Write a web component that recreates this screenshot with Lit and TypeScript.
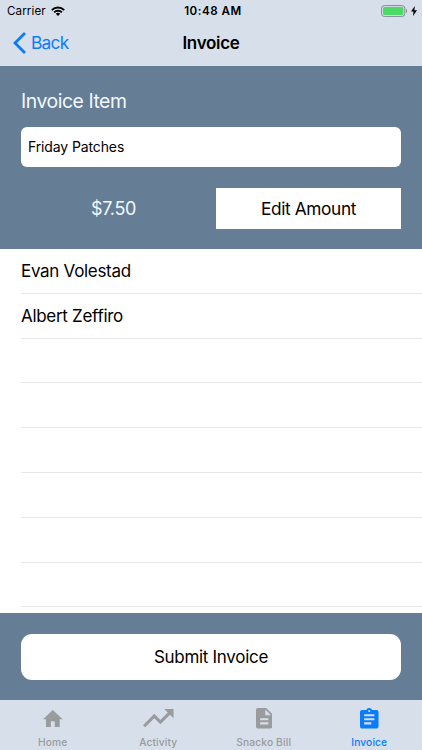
import { LitElement, html, css, svg } from "lit";
import { customElement } from "lit/decorators.js";
import { classMap } from "lit/directives/class-map.js";

const people = ["Evan Volestad", "Albert Zeffiro", "", "", "", "", "", ""];

const tabs = [
  {
    name: "home", label: "Home", box: "2 3 20 17",
    shape: svg`<path d="M10 20v-6h4v6h5v-8h3L12 3 2 12h3v8z"/>`,
  },
  {
    name: "activity", label: "Activity", box: "2 6 20 12",
    shape: svg`<path d="M16 6l2.29 2.29-4.88 4.88-4-4L2 16.59 3.41 18l6-6 4 4 6.3-6.29L22 12V6z"/>`,
  },
  {
    name: "bill", label: "Snacko Bill", box: "4 2 16 20",
    shape: svg`<path d="M14 2H6c-1.1 0-1.99.9-1.99 2L4 20c0 1.1.89 2 1.99 2H18c1.1 0 2-.9 2-2V8l-6-6zm2 16H8v-2h8v2zm0-4H8v-2h8v2zm-3-5V3.5L18.5 9H13z"/>`,
  },
  {
    name: "invoice", label: "Invoice", box: "3 1 18 20",
    shape: svg`<path d="M19 3h-4.18C14.4 1.84 13.3 1 12 1c-1.3 0-2.4.84-2.82 2H5c-1.1 0-2 .9-2 2v14c0 1.1.9 2 2 2h14c1.1 0 2-.9 2-2V5c0-1.1-.9-2-2-2zm-7 0c.55 0 1 .45 1 1s-.45 1-1 1-1-.45-1-1 .45-1 1-1zm2 14H7v-2h7v2zm3-4H7v-2h10v2zm0-4H7V7h10v2z"/>`,
  },
];

@customElement("app-root")
export class AppRoot extends LitElement {
  static styles = css`
    :host {
      display: flex;
      flex-direction: column;
      height: 750px;
      overflow: hidden;
      background: #fff;
      color: #000;
      font-family: Inter, "Liberation Sans", sans-serif;
    }
    * { box-sizing: border-box; }
    svg { display: block; }
    button { border: 0; margin: 0; padding: 0; font: inherit; color: inherit; background: none; }
    .top { height: 65.5px; flex: none; background: #d7dfea; }
    .status, .nav { display: grid; grid-template-columns: 1fr auto 1fr; align-items: center; }
    .status { height: 22px; padding: 0 5px 0 7px; font-size: 11.6px; }
    .carrier { display: flex; align-items: center; gap: 5px; letter-spacing: 0.1px; }
    .time { font-weight: 600; letter-spacing: 0.52px; padding-left: 2px; }
    .power { display: flex; justify-content: flex-end; align-items: center; gap: 3px; }
    .nav { height: 42px; padding: 0 13px; }
    .back { display: flex; align-items: center; gap: 5px; color: #087cfb; font-size: 17.3px; letter-spacing: -0.7px; }
    .back-text { padding-bottom: 1px; }
    .title { margin: 0; font-size: 17px; font-weight: 600; letter-spacing: -0.3px; }
    .item { height: 183px; flex: none; background: #657e95; padding: 25.5px 21px 0; }
    .heading { margin: 0; height: 21px; line-height: 21px; font-size: 19.4px; font-weight: 400; letter-spacing: -0.46px; color: #f2f8fd; }
    .field { margin-top: 15px; height: 40px; border-radius: 6px; background: #fff; padding: 0 7px 2px; display: flex; align-items: center; font-size: 14px; letter-spacing: -0.12px; }
    .amount { margin-top: 21px; display: grid; grid-template-columns: 185px 185px; justify-content: space-between; align-items: center; height: 41px; }
    .price { text-align: center; color: #f2f8fd; font-size: 18px; letter-spacing: -0.3px; }
    .edit { height: 41px; background: #fff; font-size: 17.3px; letter-spacing: -0.38px; }
    .list { flex: 1; min-height: 0; overflow: hidden; margin: 0; padding: 0.5px 0 0 21px; list-style: none; }
    .row { height: 44.8px; padding-top: 0.6px; border-bottom: 1px solid #e7e7e9; display: flex; align-items: center; font-size: 17px; letter-spacing: -0.3px; }
    .footer { height: 87px; flex: none; background: #657e95; padding: 20.5px 21px; }
    .submit { width: 100%; height: 46px; border-radius: 11px; background: #fff; font-size: 17px; letter-spacing: -0.3px; }
    .tabs { height: 50px; flex: none; display: grid; grid-template-columns: repeat(4, 1fr); background: #d7dfea; color: #999b9d; }
    .tab { display: flex; flex-direction: column; align-items: center; }
    .icon { height: 37px; display: flex; align-items: center; }
    .label { margin-top: -1px; font-size: 10.2px; line-height: 12px; font-weight: 500; letter-spacing: 0.15px; }
    .on { color: #087cfb; }
    .home { width: 19.6px; height: 17.5px; }
    .activity { width: 30.5px; height: 18.3px; }
    .bill { width: 16.5px; height: 20.5px; }
    .invoice { width: 18.5px; height: 20.5px; }
  `;

  render() {
    return html`
      <header class="top">
        <div class="status">
          <span class="carrier">Carrier
            <svg width="14" height="10" viewBox="0 0 14 10" fill="none" stroke="#000" stroke-width="1.9">
              <path d="M.8 4.1a8.8 8.8 0 0 1 12.4 0"/>
              <path d="M3.1 6.4a5.6 5.6 0 0 1 7.8 0"/>
              <path d="M7 10 4.8 7.7a3.2 3.2 0 0 1 4.4 0z" fill="#000" stroke="none"/>
            </svg>
          </span>
          <span class="time">10:48 AM</span>
          <span class="power">
            <svg width="27" height="12" viewBox="0 0 27 12">
              <rect x=".6" y=".6" width="23.2" height="10.8" rx="2.6" fill="none" stroke="#858b92"/>
              <rect x="2" y="2" width="20.4" height="8" rx="1.4" fill="#4cd964"/>
              <path d="M25 4v4c1.5-.6 1.5-3.4 0-4z" fill="#858b92"/>
            </svg>
            <svg width="6" height="10" viewBox="0 0 6 10"><path d="M3.8 0 0 5.6h2.5L2 10l4-5.8H3.4z"/></svg>
          </span>
        </div>
        <div class="nav">
          <button class="back">
            <svg width="13" height="22" viewBox="0 0 13 22" fill="none" stroke="currentColor" stroke-width="2.8"><path d="M12 1 2 11l10 10"/></svg>
            <span class="back-text">Back</span>
          </button>
          <h1 class="title">Invoice</h1>
        </div>
      </header>
      <section class="item">
        <h2 class="heading">Invoice Item</h2>
        <div class="field">Friday Patches</div>
        <div class="amount">
          <span class="price">$7.50</span>
          <button class="edit">Edit Amount</button>
        </div>
      </section>
      <ul class="list">${people.map((p) => html`<li class="row">${p}</li>`)}</ul>
      <footer class="footer"><button class="submit">Submit Invoice</button></footer>
      <nav class="tabs">
        ${tabs.map((t) => html`
          <div class=${classMap({ tab: true, on: t.name === "invoice" })}>
            <span class="icon"><svg class=${t.name} viewBox=${t.box} preserveAspectRatio="none" fill="currentColor">${t.shape}</svg></span>
            <span class="label">${t.label}</span>
          </div>`)}
      </nav>
    `;
  }
}
